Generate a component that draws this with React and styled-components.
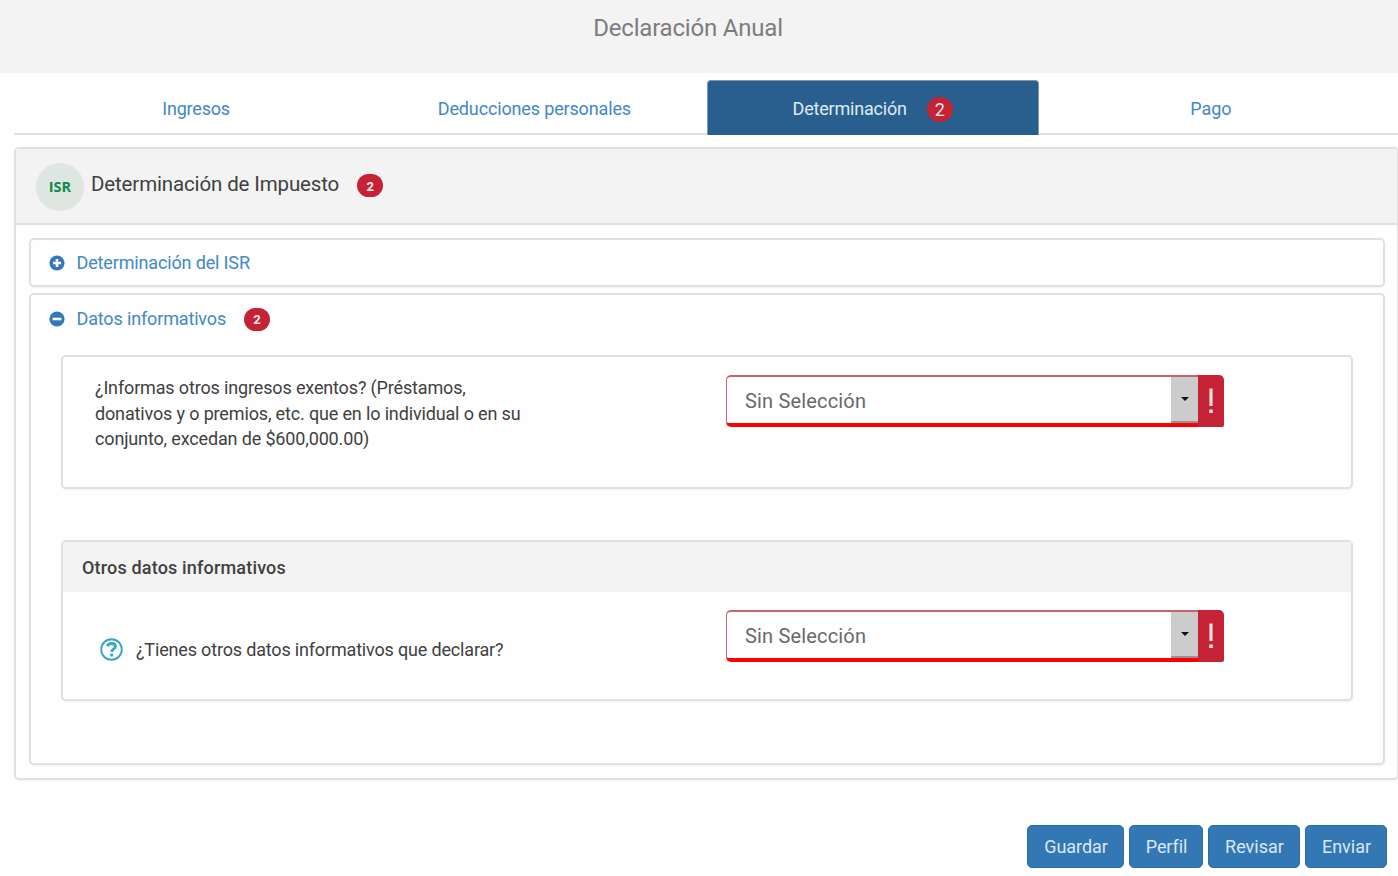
import React from "react";
import styled, { createGlobalStyle } from "styled-components";

const GlobalStyle = createGlobalStyle`
  * { box-sizing: border-box; }
  body {
    margin: 0;
    background: #fefefe;
    color: #3f3f42;
    font-family: Roboto, "Liberation Sans", sans-serif;
    font-size: 18px;
    overflow: hidden;
  }
`;

const Page = styled.div`
  height: 876px;
  overflow: hidden;
  display: flex;
  flex-direction: column;
`;

const Label = styled.span`
  display: block;
  white-space: nowrap;
  font-size: ${(p) => p.$size || 18}px;
  line-height: ${(p) => p.$line || 24}px;
  font-weight: ${(p) => p.$weight || 400};
  letter-spacing: ${(p) => p.$track || 0}px;
`;

const TopBar = styled.header`
  height: 73px;
  flex: none;
  background: #f3f3f3;
  color: #7d7d7d;
  display: flex;
  justify-content: center;
  padding: 12px 22px 0 0;
`;

const Tabs = styled.nav`
  height: 55px;
  flex: none;
  margin: 7px 0 0 14px;
  padding: 0 21px 0 16px;
  border-bottom: 2px solid #e0e0e0;
  display: flex;
  gap: 6px;
`;

const Tab = styled.a`
  flex: 1;
  height: 55px;
  display: flex;
  justify-content: center;
  align-items: center;
  gap: 20px;
  padding-top: 2px;
  color: ${(p) => (p.$active ? "#dfeaf2" : "#4288c6")};
  background: ${(p) => (p.$active ? "#285f8f" : "transparent")};
  border: 1px solid ${(p) => (p.$active ? "#7d98ae" : "transparent")};
  border-bottom: 0;
  border-radius: 4px 4px 0 0;
`;

const Badge = styled.span`
  width: 26px;
  height: ${(p) => p.$height || 23}px;
  border-radius: 13px;
  background: #c52235;
  color: #f8e9eb;
  display: flex;
  align-items: center;
  justify-content: center;
  padding-top: 1px;
  font-size: ${(p) => p.$size || 13}px;
  font-weight: ${(p) => p.$weight || 700};
`;

const Panel = styled.section`
  border: 2px solid #e0e0e0;
  border-radius: 5px;
  box-shadow: 0 1px 2px rgba(0, 0, 0, 0.05);
  background: #fefefe;
`;

const MainPanel = styled(Panel)`
  flex: none;
  height: 633px;
  margin: 12px -1px 0 14px;
`;

const PanelHeading = styled.div`
  height: 76px;
  background: #f3f3f3;
  border-bottom: 2px solid #e0e0e0;
  display: flex;
  align-items: center;
  padding: 1px 0 0 20px;
`;

const IsrMark = styled.div`
  width: 48px;
  height: 48px;
  border-radius: 50%;
  background: #dde6e1;
  color: #118947;
  display: flex;
  align-items: center;
  justify-content: center;
  margin-right: 7px;
  font-family: "Open Sans", sans-serif;
`;

const HeadingText = styled.div`
  display: flex;
  align-items: flex-start;
  gap: 18px;
  padding-bottom: 4px;
  ${Badge} { margin-top: 2px; }
`;

const PanelBody = styled.div`
  padding: 13px 12px 0 13px;
  display: flex;
  flex-direction: column;
  gap: 6px;
`;

const Section = styled(Panel)`
  height: ${(p) => p.$height}px;
`;

const Toggle = styled.a`
  height: ${(p) => p.$height}px;
  display: flex;
  align-items: center;
  padding-left: 18px;
  color: #4288c6;
  svg { margin-right: 11.5px; }
  ${Badge} { margin-left: 18px; }
`;

const SectionBody = styled.div`
  padding: 12px 30px 0;
  display: flex;
  flex-direction: column;
  gap: 51px;
`;

const Question = styled(Panel)`
  height: ${(p) => p.$height}px;
`;

const QuestionTitle = styled.div`
  height: 50px;
  padding: 14px 0 0 19px;
  background: #f3f3f3;
`;

const QuestionRow = styled.div`
  display: flex;
  justify-content: space-between;
  align-items: flex-start;
  padding: ${(p) => p.$top}px 127px 0 ${(p) => p.$left}px;
`;

const QuestionText = styled.div`
  padding-top: ${(p) => p.$top}px;
  display: flex;
  gap: 13px;
`;

const SelectGroup = styled.div`
  width: 498px;
  height: 52px;
  display: flex;
`;

const SelectBox = styled.div`
  flex: 1;
  display: flex;
  justify-content: space-between;
  border: 1px solid #c4656f;
  border-top-width: 2px;
  border-right: 0;
  border-bottom: 4px solid #ff0000;
  border-radius: 5px 0 0 5px;
  color: #69696c;
  padding-left: 18px;
`;

const SelectValue = styled.div`
  padding-top: 11.5px;
`;

const Arrow = styled.span`
  width: 27px;
  background: #cccccc;
  border-bottom: 2px solid #949494;
  display: flex;
  align-items: center;
  justify-content: center;
  &::after {
    content: "";
    border: 4px solid transparent;
    border-top-color: #111;
    border-bottom: 0;
  }
`;

const ErrorAddon = styled.div`
  width: 26px;
  background: #c52235;
  border-radius: 0 5px 2px 0;
  display: flex;
  align-items: center;
  justify-content: center;
`;

const Actions = styled.footer`
  display: flex;
  justify-content: flex-end;
  gap: 5px;
  padding: 45px 11px 0 0;
`;

const Button = styled.button`
  width: ${(p) => p.$width}px;
  height: 43px;
  padding: 0 0 0 1px;
  display: flex;
  align-items: center;
  justify-content: center;
  border: 1px solid #2e6da4;
  border-radius: 5px;
  background: #3378b5;
  color: #d9e7f3;
  font-family: inherit;
`;

function ToggleIcon({ open }) {
  return (
    <svg width="16" height="16" viewBox="0 0 16 16">
      <circle cx="8" cy="8" r="7.6" fill="#3378b8" />
      <path d={open ? "M3.6 8H12.4" : "M4 8H12M8 4V12"} stroke="#fefefe" strokeWidth="2.6" />
    </svg>
  );
}

function HelpIcon() {
  return (
    <svg width="23" height="23" viewBox="0 0 23 23" fill="none" stroke="#37a5c4">
      <circle cx="11.5" cy="11.5" r="10.3" strokeWidth="1.9" />
      <path d="M7.6 8.4C8.2 4.4 15.4 4.7 15.4 8.4C15.4 11 11.7 11 11.7 14" strokeWidth="2.8" />
      <path d="M11.7 15.6V18.4" strokeWidth="2.8" />
    </svg>
  );
}

function ErrorSelect() {
  return (
    <SelectGroup>
      <SelectBox>
        <SelectValue><Label $size={20} $track={0.17}>Sin Selección</Label></SelectValue>
        <Arrow />
      </SelectBox>
      <ErrorAddon>
        <svg width="6" height="28" viewBox="0 0 6 28" fill="#f6dfe2">
          <path d="M1.4 1.5H4.6V19H1.4ZM1.2 22.5H4.8V26H1.2Z" />
        </svg>
      </ErrorAddon>
    </SelectGroup>
  );
}

export default function App() {
  return (
    <Page>
      <GlobalStyle />
      <TopBar><Label $size={24} $line={32} $weight={450} $track={-0.2}>Declaración Anual</Label></TopBar>
      <Tabs>
        <Tab><Label $track={-0.2}>Ingresos</Label></Tab>
        <Tab><Label $track={-0.15}>Deducciones personales</Label></Tab>
        <Tab $active>
          <Label $track={-0.2}>Determinación</Label>
          <Badge $height={25} $size={18} $weight={400}>2</Badge>
        </Tab>
        <Tab><Label $track={-0.05}>Pago</Label></Tab>
      </Tabs>
      <MainPanel>
        <PanelHeading>
          <IsrMark><Label $size={14.5} $weight={700}>ISR</Label></IsrMark>
          <HeadingText>
            <Label $size={20.5} $weight={450} $track={-0.14}>Determinación de Impuesto</Label>
            <Badge>2</Badge>
          </HeadingText>
        </PanelHeading>
        <PanelBody>
          <Section $height={49}>
            <Toggle $height={46}>
              <ToggleIcon />
              <Label $weight={450} $track={-0.15}>Determinación del ISR</Label>
            </Toggle>
          </Section>
          <Section $height={472}>
            <Toggle $height={48}>
              <ToggleIcon open />
              <Label $weight={450} $track={-0.15}>Datos informativos</Label>
              <Badge>2</Badge>
            </Toggle>
            <SectionBody>
              <Question $height={134}>
                <QuestionRow $top={18} $left={32}>
                  <QuestionText $top={0}>
                    <Label $weight={450} $line={25.5} $track={-0.15}>
                      ¿Informas otros ingresos exentos? (Préstamos,<br />
                      donativos y o premios, etc. que en lo individual o en su<br />
                      conjunto, excedan de $600,000.00)
                    </Label>
                  </QuestionText>
                  <ErrorSelect />
                </QuestionRow>
              </Question>
              <Question $height={161}>
                <QuestionTitle><Label $weight={500} $track={0.17}>Otros datos informativos</Label></QuestionTitle>
                <QuestionRow $top={18} $left={37}>
                  <QuestionText $top={28}>
                    <HelpIcon />
                    <Label $weight={450} $track={-0.17}>¿Tienes otros datos informativos que declarar?</Label>
                  </QuestionText>
                  <ErrorSelect />
                </QuestionRow>
              </Question>
            </SectionBody>
          </Section>
        </PanelBody>
      </MainPanel>
      <Actions>
        <Button $width={97}><Label $track={-0.08}>Guardar</Label></Button>
        <Button $width={74}><Label $track={-0.1}>Perfil</Label></Button>
        <Button $width={92}><Label $track={0}>Revisar</Label></Button>
        <Button $width={82}><Label $track={0}>Enviar</Label></Button>
      </Actions>
    </Page>
  );
}
